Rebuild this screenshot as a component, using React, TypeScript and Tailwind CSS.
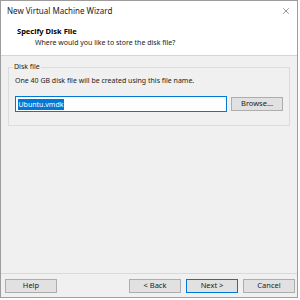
import { X } from 'lucide-react'

const font = { fontFamily: '"Noto Sans", "Open Sans", sans-serif' }

function WinButton({ label, primary }: { label: string; primary?: boolean }) {
  return (
    <button
      type="button"
      className={`h-[14px] w-[52px] bg-[#e1e1e1] text-[7.5px] leading-none text-[#222] border ${
        primary ? 'border-[#0078d7]' : 'border-[#adadad]'
      }`}
    >
      {label}
    </button>
  )
}

export default function App() {
  return (
    <div className="w-[300px] h-[300px] bg-white" style={font}>
      <div className="w-[298px] h-[298px] border border-[#9c9c9c] flex flex-col">
        {/* title bar */}
        <div className="h-[20px] bg-white flex items-center justify-between pl-[6px] pr-[6px]">
          <span className="text-[8px] text-[#222]">New Virtual Machine Wizard</span>
          <X size={10} strokeWidth={1.2} className="text-[#333]" />
        </div>

        {/* header */}
        <div className="h-[35px] bg-white border-b border-[#d5d5d5] pl-[16px] pt-[5px]">
          <div className="text-[7.5px] font-bold text-black leading-[10px]">Specify Disk File</div>
          <div className="text-[7px] text-[#222] leading-[10px] pl-[18px] mt-[2px]">
            Where would you like to store the disk file?
          </div>
        </div>

        {/* body */}
        <div className="flex-1 bg-[#f0f0f0] flex flex-col">
          <div className="flex-1 px-[7px] pt-[11px]">
            <div className="relative border border-[#dcdcdc] h-[59px] px-[6px] pt-[8px]">
              <span className="absolute -top-[6px] left-[4px] bg-[#f0f0f0] px-[1px] text-[7px] leading-[10px] text-[#222]">
                Disk file
              </span>
              <div className="text-[7px] leading-[10px] text-[#222]">
                One 40 GB disk file will be created using this file name.
              </div>
              <div className="flex items-center mt-[10px] gap-[4px]">
                <div className="w-[212px] h-[16px] bg-white border border-[#0078d7] flex items-center pl-[2px]">
                  <span className="bg-[#0078d7] text-white text-[7px] leading-[11px] px-[0.5px]">
                    Ubuntu.vmdk
                  </span>
                </div>
                <WinButton label="Browse..." />
              </div>
            </div>
          </div>

          {/* footer */}
          <div className="border-t border-[#d9d9d9] h-[24px] flex items-center pl-[4px] pr-[2px]">
            <WinButton label="Help" />
            <div className="ml-auto flex gap-[5px]">
              <WinButton label="< Back" />
              <WinButton label="Next >" primary />
              <WinButton label="Cancel" />
            </div>
          </div>
        </div>
      </div>
    </div>
  )
}
